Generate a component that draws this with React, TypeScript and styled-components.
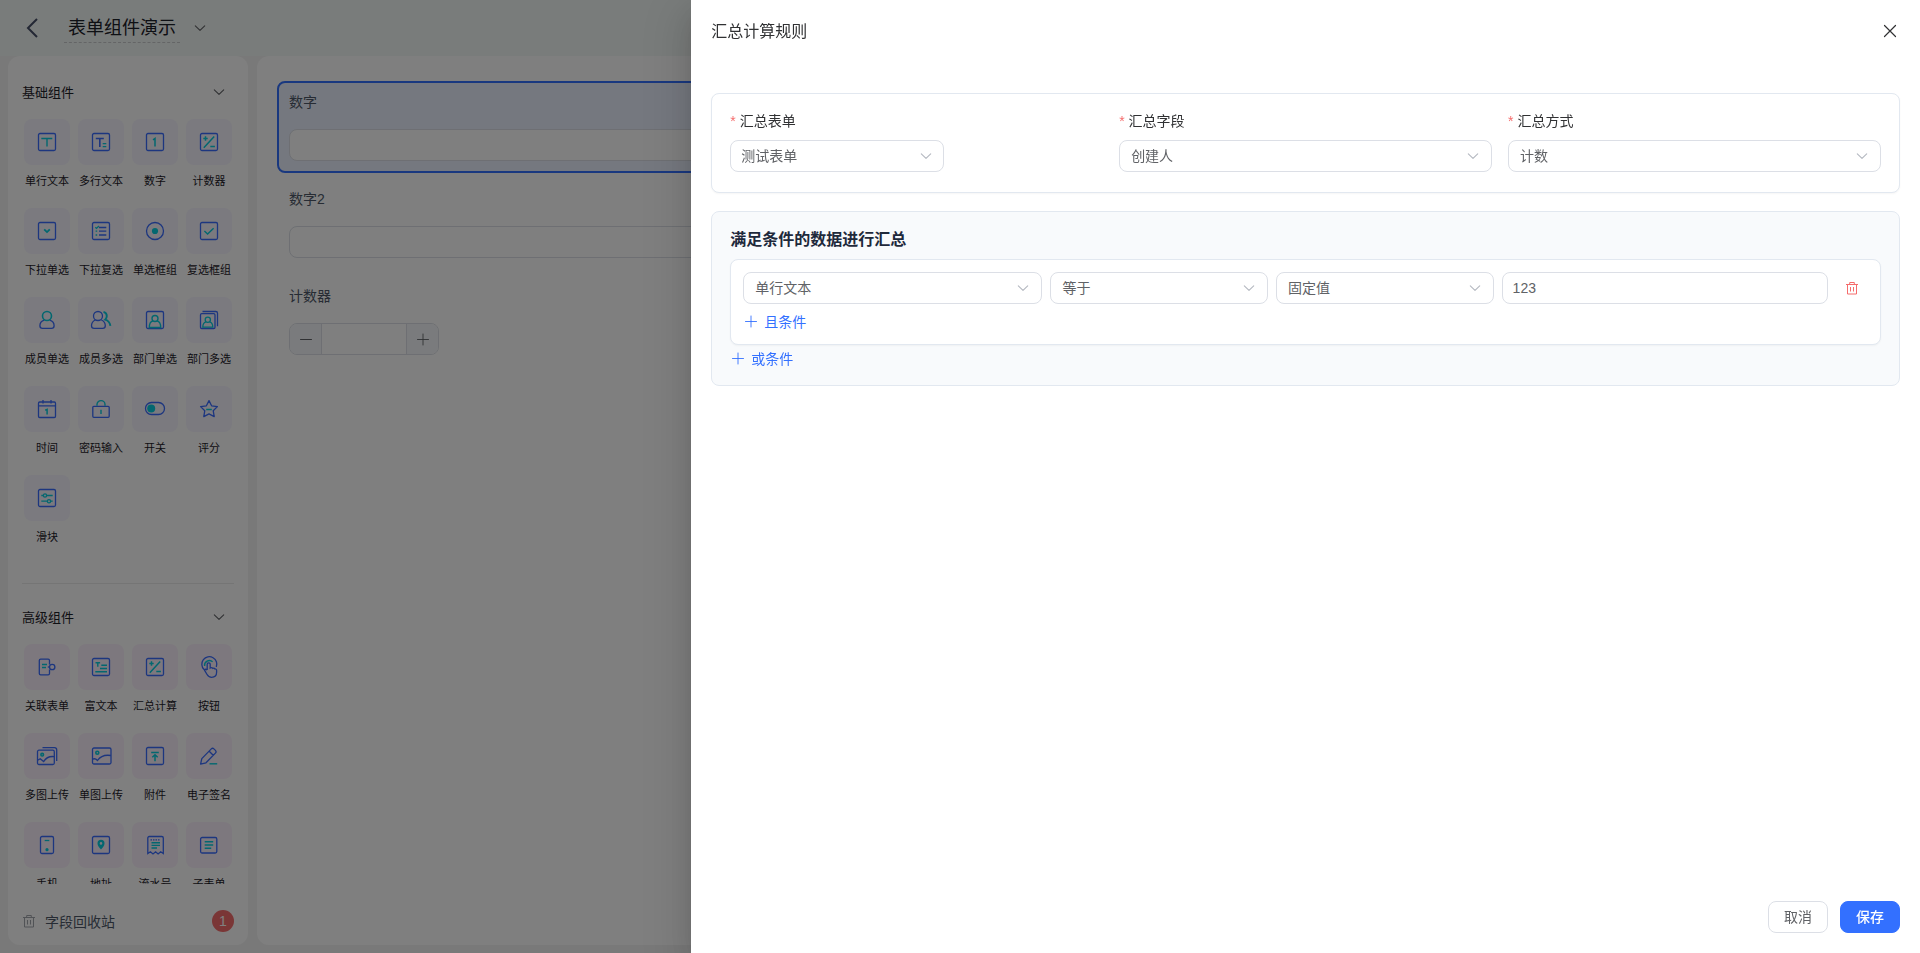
import React, { useId } from 'react';
import styled, { createGlobalStyle, css } from 'styled-components';

const BLUE = '#3a6cff';
const CYAN = '#06cfe0';

const GlobalStyle = createGlobalStyle`
  *, *::before, *::after { box-sizing: border-box; }
  body {
    margin: 0;
    overflow: hidden;
    color: #303133;
    font-family: "Liberation Sans", "Noto Sans CJK SC", sans-serif;
    font-size: 14px;
  }
  button, input, select { font: inherit; color: inherit; }
`;

/* ---------- shared ---------- */

const Svg = styled.svg`
  display: block;
  flex: none;
  fill: none;
  stroke: currentColor;
`;

const PlainButton = styled.button`
  display: inline-flex;
  align-items: center;
  justify-content: center;
  padding: 0;
  border: 0;
  background: none;
  cursor: pointer;
`;

const Chevron = () => (
  <Svg width="14" height="14" viewBox="0 0 14 14" strokeWidth="1.1" strokeLinecap="round" strokeLinejoin="round">
    <path d="M2.3 4.8 7 9.3l4.7-4.5" />
  </Svg>
);

const Plus = () => (
  <Svg width="14" height="14" viewBox="0 0 14 14" strokeWidth="0.9" strokeLinecap="round">
    <path d="M1.5 7.5h11M7 2v11" />
  </Svg>
);

const Minus = () => (
  <Svg width="14" height="14" viewBox="0 0 14 14" strokeWidth="1" strokeLinecap="round">
    <path d="M1.5 7.5h11" />
  </Svg>
);

const Trash = () => (
  <Svg width="14" height="14" viewBox="0 0 14 14" strokeWidth="1">
    <path d="M1 3.5h12M2.5 3.5v9.500h9v-9.500M4.700 3V1.500h4.600V3M5.500 6v4.500M8.500 6v4.500" />
  </Svg>
);

/* ---------- palette icons ---------- */

const Frame = () => <rect x="3.5" y="3.5" width="17" height="17" rx="1.5" />;

const glyphs: Record<string, React.ReactNode> = {
  text: <><Frame /><path stroke={CYAN} strokeWidth="1.4" d="M6.3 8.5h11M12 8.5v8" /></>,
  textarea: <><Frame /><path strokeWidth="1.6" d="M6.8 8.5h8M10.8 8.5v8.5" /><path stroke={CYAN} d="M13.7 13.7h3.6M13.7 16.7h3.6" /></>,
  number: <><Frame /><path stroke={CYAN} strokeWidth="1.5" d="M10 9.8 12 8.5v8" /></>,
  calc: <><Frame /><path stroke={CYAN} strokeWidth="1.5" d="M6.3 8.5h4.4M8.5 6.3v4.4M6.8 17.7 17.2 6.5M13.3 16.5h4.6" /></>,
  dropdown: <><Frame /><path stroke={CYAN} strokeWidth="1.8" d="m9.2 10.3 2.8 2.8 2.8-2.8" /></>,
  checklist: <><Frame /><path d="M10 8.5h7.3M10 12.2h7.3M10 16h7.3" /><path stroke={CYAN} d="m6.3 8.2 1.2 1.2 2.4-2.4M6.6 12.2h1.6M6.6 16h1.6" /></>,
  radio: <><circle cx="12" cy="12" r="8.5" /><circle cx="12" cy="12" r="3.1" fill={CYAN} stroke="none" /></>,
  check: <><Frame /><path stroke={CYAN} strokeWidth="1.4" d="m7.4 12 3.2 3 6-5.8" /></>,
  user: <><path d="M9.3 12.2c-2.7.8-4.4 2.8-4.4 5.6 0 1.6.8 2.6 2.6 2.6h9c1.8 0 2.6-1 2.6-2.6 0-2.8-1.7-4.8-4.4-5.6" /><circle cx="12" cy="8" r="4.5" stroke={CYAN} strokeWidth="1.6" /></>,
  users: <><path d="M6.5 12c-2.5.9-4 3-4 5.8 0 1.6.8 2.6 2.6 2.6h8.6c1.8 0 2.6-1 2.6-2.6 0-2.8-1.5-4.9-4-5.8" /><circle cx="9" cy="8" r="4.5" /><path stroke={CYAN} strokeWidth="1.9" d="M14.5 3.8c2.3.6 3.3 2.3 3.3 4.3 0 1.5-.6 2.6-1.6 3.5 3 1 4.8 3 5.2 6.3" /></>,
  dept: <><Frame /><g stroke={CYAN} strokeWidth="1.4"><circle cx="12" cy="10.5" r="3" /><path d="M10 12.9c-2.5.6-3.7 2.8-3.7 6.6h11.4c0-3.8-1.2-6-3.7-6.6" /></g></>,
  depts: <><rect x="3.5" y="5.7" width="14.5" height="14.8" rx="1.2" /><path d="M5.5 3.5h13.3c1 0 1.7.7 1.7 1.7v13" /><g stroke={CYAN} strokeWidth="1.3"><circle cx="10.8" cy="11.8" r="2.6" /><path d="M9 13.8c-2 .5-3.2 2.2-3.2 5.4h10c0-3.2-1.2-4.9-3.2-5.4" /></g></>,
  date: <><rect x="3.5" y="5" width="17" height="15.5" rx="1.2" /><path d="M3.5 8.8h17M8 3v3.5M16 3v3.5" /><path stroke={CYAN} strokeWidth="1.5" d="m10.2 13.3 1.9-.9v5" /></>,
  lock: <><rect x="3.8" y="9.3" width="16.4" height="11" rx="1" /><path stroke={CYAN} strokeWidth="1.4" d="M8 8.7V7.6a4 4 0 0 1 8 0v1.1M12 12.8v4.2" /></>,
  toggle: <><rect x="2.5" y="5.5" width="19" height="12" rx="6" /><circle cx="8.2" cy="11.5" r="4" fill={CYAN} stroke="none" /></>,
  star: <><path d="m12 3.6 2.6 5.2 5.8.8-4.2 4.1 1 5.9-5.2-2.7-5.2 2.7 1-5.9-4.2-4.1 5.8-.8z" strokeLinejoin="round" /><path stroke={CYAN} strokeWidth="1.5" d="M9.2 12.5h5.6" /></>,
  slider: <><Frame /><g stroke={CYAN}><path d="M6.3 9.5h2M11.7 9.5h6M6.3 15.2h6M15.7 15.2h2" /><circle cx="10" cy="9.5" r="1.6" /><circle cx="14" cy="15.2" r="1.6" /></g></>,
  relation: <><path d="M14.5 9.5V5.5c0-.8-.6-1.4-1.4-1.4H5.7c-.8 0-1.4.6-1.4 1.4v13c0 .8.6 1.4 1.4 1.4h7.4c.8 0 1.4-.6 1.4-1.4v-4" /><circle cx="17.2" cy="12" r="2.7" /><path d="M12.8 12h1.7" /><path stroke={CYAN} strokeWidth="1.5" d="M7 9.6h5M7 12.5h4" /></>,
  rich: <><Frame /><path stroke={CYAN} strokeWidth="1.4" d="M6.5 7.8h4.6M8.8 7.8v4M12.3 10.2H18M11 13.5h7M6.3 16.8H18" /></>,
  hand: <><path d="M7 14.5A7.500 7.500 0 1 1 19.300 12M10.200 15V9.300a1.500 1.500 0 0 1 3 0v3.700c.9-.6 2-.4 2.600.4.800-.4 1.700-.2 2.100.5.900-.2 1.700.4 1.700 1.400v2c0 3-1.900 5-4.900 5-2.300 0-3.700-1-4.800-3l-2.400-4.200c.5-1.200 1.800-1.100 2.700-.1" /><path stroke={CYAN} strokeWidth="1.400" d="M7.600 11a4.800 4.800 0 0 1 8-4.200" /></>,
  images: <><rect x="2.5" y="6.2" width="16.8" height="14.3" rx="1.5" /><path d="M7.5 3.7h12c1.3 0 2.2.8 2.2 2.2V17M2.6 16.3l2.6-1.6 3.4 2.9c2.2-3.6 5.5-5.6 10.6-5" /><circle cx="7.2" cy="10.7" r="1.3" stroke={CYAN} strokeWidth="1.6" /></>,
  image: <><rect x="3.5" y="4" width="18.5" height="16" rx="1.5" /><path d="M3.6 15.2c2-1 3-.8 4.9 1.3 3.1-4.5 7.3-6 13.4-5" /><circle cx="8.3" cy="8.8" r="1.5" stroke={CYAN} strokeWidth="1.6" /></>,
  attach: <><Frame /><path stroke={CYAN} strokeWidth="1.5" d="M8.2 8.5h7.6M12 17.2v-6M9.3 13.3l2.7-2.5 2.7 2.5" /></>,
  sign: <><path d="M14.3 4.9 4.8 14.6l-1.2 5.5 5.4-1.3 9.4-9.7c.8-.8.8-1.9 0-2.7l-1.5-1.5c-.8-.8-1.8-.8-2.6 0zM12.2 7.2l4 4" strokeLinejoin="round" /><path stroke={CYAN} strokeWidth="1.4" d="M12.5 19.8h7.7" /></>,
  phone: <><rect x="5.5" y="3.5" width="13" height="17" rx="1.5" /><path stroke={CYAN} d="M9.7 7.5h4.6" /><circle cx="12" cy="16.7" r="1.6" fill={CYAN} stroke="none" /></>,
  place: <><Frame /><path fill={CYAN} stroke="none" fillRule="evenodd" d="M12 6.800a3.500 3.500 0 0 1 3.500 3.500c0 2.300-1.600 4.400-3.500 6.200-1.900-1.800-3.500-3.900-3.500-6.200A3.500 3.500 0 0 1 12 6.800zm0 2.300a1.300 1.300 0 1 0 0 2.600 1.300 1.300 0 0 0 0-2.600z" /></>,
  serial: <><path d="M4.8 20.500V5c0-.9.6-1.500 1.500-1.500h12.500c.9 0 1.500.6 1.500 1.500v15.500l-2.600-1.700-2.600 2.200-2.500-2.200-2.600 2.200-2.600-2.200z" /><path strokeDasharray="1.5 1" d="M7.5 6.800h10" /><path stroke={CYAN} strokeWidth="1.4" d="M8.5 9.700h8.500M8.500 12.400h8.500M8.500 15h5.500" /></>,
  subform: <><rect x="3.6" y="4.5" width="16.2" height="15.5" rx="1.5" /><path stroke={CYAN} strokeWidth="1.4" d="M7.700 8.800h8.500M7.700 12h8.500M7.700 15.300h6.500" /></>,
};

/* ---------- editor behind the drawer ---------- */

const Page = styled.div`
  display: flex;
  flex-direction: column;
  height: 100vh;
  background: #f3f3f3;
`;

const TopBar = styled.header`
  display: flex;
  align-items: center;
  flex: none;
  height: 56px;
  padding: 0 20px;
  background: #f3f8f6;
`;

const BackButton = styled(PlainButton)`
  width: 24px;
  height: 24px;
  color: #475069;
`;

const FormTitle = styled.h1`
  margin: 0 13px 0 20px;
  padding: 0 4px;
  border-bottom: 1px dashed #c8cacc;
  font-size: 18px;
  line-height: 28px;
  font-weight: 400;
  color: #1d2129;
`;

const Chev = styled(PlainButton)`
  color: #606266;
`;

const Workspace = styled.div`
  display: flex;
  flex: 1;
  gap: 9px;
  min-height: 0;
  padding: 0 8px 8px;
`;

const Sidebar = styled.aside`
  display: flex;
  flex-direction: column;
  flex: none;
  width: 240px;
  border-radius: 12px;
  background: #fff;
`;

const Palette = styled.div`
  flex: 1;
  min-height: 0;
  padding: 3px 14px 0;
  overflow: hidden;
`;

const Group = styled.section`
  padding: 13px 0 38px;
  & + & { border-top: 1px solid #ebebeb; }
`;

const GroupHead = styled.div`
  display: flex;
  align-items: center;
  justify-content: space-between;
  height: 40px;
  margin-bottom: 7px;
  padding-right: 8px;
`;

const GroupTitle = styled.h2`
  margin: 0;
  padding-bottom: 2px;
  font-size: 13px;
  font-weight: 400;
  color: #1d2129;
`;

const Grid = styled.div`
  display: grid;
  grid-template-columns: repeat(4, 46px);
  gap: 19px 8px;
  padding-left: 2px;
`;

const Tool = styled.button`
  display: flex;
  flex-direction: column;
  align-items: center;
  gap: 8px;
  padding: 0;
  border: 0;
  background: none;
  font-size: 11px;
  line-height: 16px;
  white-space: nowrap;
  color: #1d2129;
  cursor: grab;
`;

const Tile = styled.span<{ $tint: string }>`
  display: grid;
  place-items: center;
  width: 46px;
  height: 46px;
  border-radius: 8px;
  background: ${p => p.$tint};
  color: ${BLUE};
`;

const Recycle = styled.div`
  display: flex;
  align-items: center;
  gap: 9px;
  flex: none;
  height: 61px;
  padding: 12px 14px 0;
  color: #4e5969;
`;

const RecycleIcon = styled.span`
  color: #a3a6ad;
`;

const Badge = styled.span`
  display: grid;
  place-items: center;
  width: 22px;
  height: 22px;
  margin-left: auto;
  border-radius: 50%;
  background: #f56c6c;
  color: #fff;
`;

const Canvas = styled.main`
  display: flex;
  flex-direction: column;
  flex: 1;
  gap: 5px;
  padding: 25px 20px;
  border-radius: 12px;
  background: #fff;
`;

const Item = styled.div<{ $selected?: boolean }>`
  display: flex;
  flex-direction: column;
  height: 92px;
  padding: 8px 10px 10px;
  border: 2px solid transparent;
  border-radius: 8px;
  ${p => p.$selected && css`
    border-color: #3370ff;
    background: #ebf1ff;
  `}
`;

const ItemLabel = styled.label`
  flex: 1;
  line-height: 22px;
  color: #4e5969;
`;

const control = css`
  width: 100%;
  height: 32px;
  border: 1px solid #dcdfe6;
  border-radius: 8px;
  background: #fff;
  outline: none;
`;

const TextBox = styled.input`
  ${control}
  padding: 0 10px;
  color: #606266;
`;

const Stepper = styled.div`
  ${control}
  display: flex;
  width: 150px;
  overflow: hidden;
`;

const StepButton = styled(PlainButton)`
  flex: none;
  width: 31px;
  background: #f5f7fa;
  color: #606266;
`;

const StepInput = styled.input`
  flex: 1;
  min-width: 0;
  border: solid #dcdfe6;
  border-width: 0 1px;
  text-align: center;
  outline: none;
`;

/* ---------- drawer ---------- */

const Overlay = styled.div`
  position: fixed;
  inset: 0;
  display: flex;
  justify-content: flex-end;
  background: rgba(0, 0, 0, 0.5);
`;

const Drawer = styled.section`
  display: flex;
  flex-direction: column;
  width: 64%;
  height: 100%;
  background: #fff;
  box-shadow: 0 16px 48px 16px rgba(0, 0, 0, 0.08), 0 12px 32px rgba(0, 0, 0, 0.12), 0 8px 16px -8px rgba(0, 0, 0, 0.16);
`;

const DrawerHead = styled.header`
  display: flex;
  align-items: center;
  justify-content: space-between;
  height: 62px;
  padding: 0 19px 0 20px;
`;

const DrawerTitle = styled.h2`
  margin: 0;
  padding-bottom: 2px;
  font-size: 16px;
  font-weight: 400;
  color: #303133;
`;

const CloseButton = styled(PlainButton)`
  width: 22px;
  height: 22px;
  color: #303133;
`;

const DrawerBody = styled.div`
  display: flex;
  flex-direction: column;
  flex: 1;
  gap: 18px;
  padding: 31px 20px 20px;
`;

const Card = styled.section<{ $muted?: boolean }>`
  padding: 16px 18px 15px;
  border: 1px solid #e2e8f0;
  border-radius: 8px;
  background: ${p => (p.$muted ? '#f8fafc' : '#fff')};
  box-shadow: ${p => (p.$muted ? 'none' : '0 1px 2px rgba(0, 0, 0, 0.04)')};
`;

const Fields = styled.div`
  display: grid;
  grid-template-columns: repeat(3, 1fr);
  gap: 16px;
  padding-bottom: 5px;
`;

const FieldLabel = styled.label`
  display: flex;
  gap: 4px;
  margin-bottom: 8px;
  line-height: 22px;
  color: #303133;
`;

const Star = styled.span`
  color: #f56c6c;
`;

const SelectWrap = styled.div<{ $narrow?: boolean }>`
  display: grid;
  align-items: center;
  width: ${p => (p.$narrow ? '214px' : 'auto')};
  min-width: 0;
  & > * { grid-area: 1 / 1; }
`;

const NativeSelect = styled.select<{ $narrow?: boolean }>`
  ${control}
  appearance: none;
  padding: 0 30px 0 ${p => (p.$narrow ? '10px' : '11px')};
  color: #606266;
`;

const SelectArrow = styled.span<{ $narrow?: boolean }>`
  justify-self: end;
  margin-right: ${p => (p.$narrow ? '11px' : '12px')};
  color: #b4b8c0;
  pointer-events: none;
`;

const Heading = styled.h3`
  margin: 0 0 8px;
  font-size: 16px;
  line-height: 23px;
  font-weight: 700;
  color: #1e293b;
`;

const RuleBox = styled.div`
  padding: 12px 12px 11px;
  border: 1px solid #e2e8f0;
  border-radius: 8px;
  background: #fff;
  box-shadow: 0 1px 2px rgba(0, 0, 0, 0.04);
`;

const RuleRow = styled.div`
  display: grid;
  grid-template-columns: 11fr 8fr 8fr 12fr 32px;
  gap: 8px;
  margin-bottom: 5px;
`;

const DeleteButton = styled(PlainButton)`
  color: #f56c6c;
`;

const AddLink = styled(PlainButton)`
  display: flex;
  gap: 6px;
  height: 24px;
  padding-left: 1px;
  color: #3370ff;
`;

const OrRow = styled.div`
  padding-top: 1px;
`;

const DrawerFoot = styled.footer`
  display: flex;
  justify-content: flex-end;
  gap: 12px;
  padding: 20px;
`;

const ActionButton = styled.button<{ $primary?: boolean }>`
  width: 60px;
  height: 32px;
  padding: 0 0 2px;
  border: 1px solid ${p => (p.$primary ? '#3370ff' : '#dcdfe6')};
  border-radius: 8px;
  background: ${p => (p.$primary ? '#3370ff' : '#fff')};
  color: ${p => (p.$primary ? '#fff' : '#606266')};
  font-weight: ${p => (p.$primary ? 500 : 400)};
  cursor: pointer;
`;

/* ---------- data ---------- */

type ToolDef = [glyph: string, label: string];

const basicTools: ToolDef[] = [
  ['text', '单行文本'], ['textarea', '多行文本'], ['number', '数字'], ['calc', '计数器'],
  ['dropdown', '下拉单选'], ['checklist', '下拉复选'], ['radio', '单选框组'], ['check', '复选框组'],
  ['user', '成员单选'], ['users', '成员多选'], ['dept', '部门单选'], ['depts', '部门多选'],
  ['date', '时间'], ['lock', '密码输入'], ['toggle', '开关'], ['star', '评分'],
  ['slider', '滑块'],
];

const advancedTools: ToolDef[] = [
  ['relation', '关联表单'], ['rich', '富文本'], ['calc', '汇总计算'], ['hand', '按钮'],
  ['images', '多图上传'], ['image', '单图上传'], ['attach', '附件'], ['sign', '电子签名'],
  ['phone', '手机'], ['place', '地址'], ['serial', '流水号'], ['subform', '子表单'],
];

function ToolGroup({ title, tint, tools }: { title: string; tint: string; tools: ToolDef[] }) {
  return (
    <Group>
      <GroupHead>
        <GroupTitle>{title}</GroupTitle>
        <Chev type="button" aria-label="收起"><Chevron /></Chev>
      </GroupHead>
      <Grid>
        {tools.map(([glyph, label]) => (
          <Tool key={label} type="button">
            <Tile $tint={tint}>
              <Svg width="24" height="24" viewBox="0 0 24 24" strokeWidth="1.3">{glyphs[glyph]}</Svg>
            </Tile>
            {label}
          </Tool>
        ))}
      </Grid>
    </Group>
  );
}

interface SelectProps { id?: string; value: string; narrow?: boolean; ariaLabel?: string }

function Select({ id, value, narrow, ariaLabel }: SelectProps) {
  return (
    <SelectWrap $narrow={narrow}>
      <NativeSelect id={id} $narrow={narrow} defaultValue={value} aria-label={ariaLabel}>
        <option>{value}</option>
      </NativeSelect>
      <SelectArrow $narrow={narrow}><Chevron /></SelectArrow>
    </SelectWrap>
  );
}

function Field({ label, value, narrow }: { label: string; value: string; narrow?: boolean }) {
  const id = useId();
  return (
    <div>
      <FieldLabel htmlFor={id}><Star>*</Star>{label}</FieldLabel>
      <Select id={id} value={value} narrow={narrow} />
    </div>
  );
}

export default function App() {
  return (
    <>
      <GlobalStyle />
      <Page>
        <TopBar>
          <BackButton type="button" aria-label="返回">
            <Svg width="24" height="24" viewBox="0 0 24 24" strokeWidth="2"><path d="m17 3-9 9 9 9" /></Svg>
          </BackButton>
          <FormTitle>表单组件演示</FormTitle>
          <Chev type="button" aria-label="更多"><Chevron /></Chev>
        </TopBar>
        <Workspace>
          <Sidebar>
            <Palette>
              <ToolGroup title="基础组件" tint="#f6f5fe" tools={basicTools} />
              <ToolGroup title="高级组件" tint="#faf1fc" tools={advancedTools} />
            </Palette>
            <Recycle>
              <RecycleIcon><Trash /></RecycleIcon>
              字段回收站
              <Badge>1</Badge>
            </Recycle>
          </Sidebar>
          <Canvas>
            <Item $selected>
              <ItemLabel htmlFor="num1">数字</ItemLabel>
              <TextBox id="num1" />
            </Item>
            <Item>
              <ItemLabel htmlFor="num2">数字2</ItemLabel>
              <TextBox id="num2" />
            </Item>
            <Item>
              <ItemLabel htmlFor="counter">计数器</ItemLabel>
              <Stepper>
                <StepButton type="button" aria-label="减少"><Minus /></StepButton>
                <StepInput id="counter" />
                <StepButton type="button" aria-label="增加"><Plus /></StepButton>
              </Stepper>
            </Item>
          </Canvas>
        </Workspace>
      </Page>

      <Overlay>
        <Drawer role="dialog" aria-modal="true" aria-labelledby="drawer-title">
          <DrawerHead>
            <DrawerTitle id="drawer-title">汇总计算规则</DrawerTitle>
            <CloseButton type="button" aria-label="关闭">
              <Svg width="16" height="16" viewBox="0 0 16 16" strokeWidth="1.2" strokeLinecap="round"><path d="m2.5 2.5 11 11M13.5 2.5l-11 11" /></Svg>
            </CloseButton>
          </DrawerHead>
          <DrawerBody>
            <Card>
              <Fields>
                <Field label="汇总表单" value="测试表单" narrow />
                <Field label="汇总字段" value="创建人" />
                <Field label="汇总方式" value="计数" />
              </Fields>
            </Card>
            <Card $muted>
              <Heading>满足条件的数据进行汇总</Heading>
              <RuleBox>
                <RuleRow>
                  <Select value="单行文本" ariaLabel="字段" />
                  <Select value="等于" ariaLabel="条件" />
                  <Select value="固定值" ariaLabel="值类型" />
                  <TextBox defaultValue="123" aria-label="值" />
                  <DeleteButton type="button" aria-label="删除条件"><Trash /></DeleteButton>
                </RuleRow>
                <AddLink type="button"><Plus />且条件</AddLink>
              </RuleBox>
              <OrRow>
                <AddLink type="button"><Plus />或条件</AddLink>
              </OrRow>
            </Card>
          </DrawerBody>
          <DrawerFoot>
            <ActionButton type="button">取消</ActionButton>
            <ActionButton type="button" $primary>保存</ActionButton>
          </DrawerFoot>
        </Drawer>
      </Overlay>
    </>
  );
}
